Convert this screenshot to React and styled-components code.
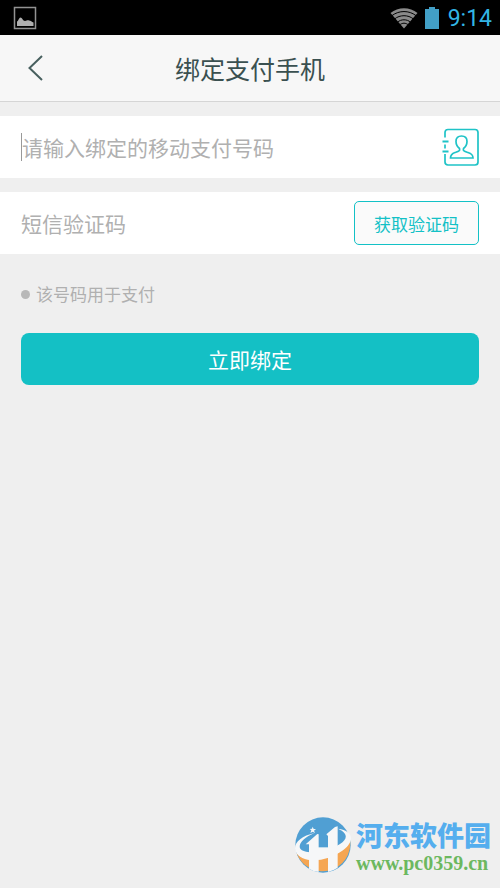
import styled, { createGlobalStyle } from 'styled-components'

const App = () => {
  return (
    <>
      <GlobalStyle />
      <Screen>
        <StatusBar>
          <PictureIcon />
          <StatusIcons>
            <WifiIcon />
            <BatteryIcon />
            <Clock>9:14</Clock>
          </StatusIcons>
        </StatusBar>

        <Header>
          <BackButton type="button" aria-label="返回">
            <BackIcon />
          </BackButton>
          <Title>绑定支付手机</Title>
        </Header>

        <Form onSubmit={(e) => e.preventDefault()}>
          <Row>
            <Caret />
            <Field type="tel" aria-label="移动支付号码" placeholder="请输入绑定的移动支付号码" />
            <IconButton type="button" aria-label="通讯录">
              <ContactIcon />
            </IconButton>
          </Row>
          <Row>
            <Field type="text" aria-label="短信验证码" placeholder="短信验证码" />
            <CodeButton type="button">获取验证码</CodeButton>
          </Row>
          <Note>该号码用于支付</Note>
          <SubmitButton type="submit">立即绑定</SubmitButton>
        </Form>

        <Brand>
          <BrandLogo />
          <BrandText>
            <BrandName>河东软件园</BrandName>
            <BrandUrl>www.pc0359.cn</BrandUrl>
          </BrandText>
        </Brand>
      </Screen>
    </>
  )
}

const PictureIcon = () => (
  <svg width="24" height="24" viewBox="0 0 24 24" aria-hidden="true">
    <rect x="1.5" y="1.5" width="21" height="21" fill="none" stroke="#929292" strokeWidth="1.5" />
    <path d="M4 20V15.5C5.5 15 6 11.500 7.500 11.500C9 11.500 10 15 12 15C13.500 15 14.500 14 16 14.500C18 14.500 18.500 16 20.500 16.500V20Z" fill="#b0b0b0" />
  </svg>
)

const WifiIcon = () => (
  <svg width="28" height="22" viewBox="0 0 28 22" aria-hidden="true">
    <path d="M0.500 6C8 -0.500 20 -0.500 27.500 6L14 21.500Z" fill="#8a8a8a" />
    <g fill="none" stroke="#000" strokeWidth="1">
      <path d="M2 8.600C9 3.200 19 3.200 26 8.600" />
      <path d="M4.500 12C10 7.600 18 7.600 23.500 12" />
      <path d="M7.500 15.200C11 12 17 12 20.500 15.200" />
      <path d="M9.500 18C12.500 15.600 15.500 15.600 18.500 18" />
    </g>
  </svg>
)

const BatteryIcon = () => (
  <svg width="14" height="22" viewBox="0 0 14 22" aria-hidden="true">
    <path d="M0 2H4V0H10V2H14V22H0Z" fill="#429fc6" />
  </svg>
)

const BackIcon = () => (
  <svg width="16" height="26" viewBox="0 0 16 26" aria-hidden="true">
    <path d="M14 1L1.500 13L14 25" fill="none" stroke="#48605f" strokeWidth="2" />
  </svg>
)

const ContactIcon = () => (
  <svg width="38" height="38" viewBox="0 0 38 38" aria-hidden="true">
    <g fill="none" stroke="#1fc3c7" strokeWidth="1.700">
      <path d="M4 9.500V4.500Q4 1.500 7 1.500H34Q37 1.500 37 4.500V34Q37 37 34 37H7Q4 37 4 34V26" />
      <path d="M4 16.500V20.500" />
      <path d="M1.500 13.500H7.500M1.500 23.500H7.500" strokeWidth="2" />
      <path d="M18.500 20.500C16 18.500 15 17 15 13.500C15 10 17 8 20.500 8C24 8 26 10 26 13.500C26 17 25 18.500 22.500 20.500C21.500 23 24 23.500 27 24.500C31 25.800 32 27 32 30H9.500C9.500 27 10.500 25.800 14 24.500C17 23.500 19.500 23 18.500 20.500Z" />
    </g>
  </svg>
)

const BrandLogo = () => (
  <svg width="62" height="62" viewBox="0 0 186 186" aria-hidden="true">
    <circle cx="93" cy="93" r="83" fill="#509fd3" />
    <path d="M14 118C55 145 125 136 174 78A83 83 0 0 1 14 118Z" fill="#f5a653" />
    <g fill="#f6f7f8">
      <path d="M41 91L76 60L80 61V174Q66 174 51 164V91Z" />
      <path d="M103 61L129 39L137 37V161Q124 170 108 174V66Z" />
      <path d="M78 100H112V124H78Z" />
      <path d="M68 57C24 66 2 91 11 112C26 150 102 147 153 109C190 81 184 50 138 44C168 57 168 74 144 90C101 118 36 121 25 104C17 91 35 70 68 57Z" />
      <path d="M62 38L65 45L72 45L66 50L69 57L62 53L55 57L58 49L53 45L60 44Z" />
    </g>
  </svg>
)

const GlobalStyle = createGlobalStyle`
  * {
    box-sizing: border-box;
  }

  body {
    margin: 0;
    background: #efefef;
    font-family: "Noto Sans CJK SC", sans-serif;
  }

  button, input {
    font-family: inherit;
  }

  svg {
    display: block;
    flex: none;
  }
`

const Screen = styled.main`
  position: relative;
  min-height: 100vh;
`

const StatusBar = styled.div`
  display: flex;
  align-items: center;
  justify-content: space-between;
  height: 35px;
  padding: 0 8px 0 13px;
  background: #000;
`

const StatusIcons = styled.div`
  display: flex;
  align-items: center;
  gap: 7px;
`

const Clock = styled.time`
  padding: 2px 0 0 2px;
  color: #33b5e5;
  font-family: Roboto, sans-serif;
  font-size: 23px;
  line-height: 32px;
`

const Header = styled.header`
  display: grid;
  grid-template-columns: 56px 1fr 56px;
  align-items: center;
  height: 67px;
  border-bottom: 1px solid #d5d5d5;
  background: #f7f7f7;
`

const BackButton = styled.button`
  display: flex;
  justify-content: flex-end;
  padding: 12px;
  border: 0;
  background: none;
  cursor: pointer;
`

const Title = styled.h1`
  margin: 0;
  color: #3a5050;
  font-size: 25px;
  font-weight: 400;
  line-height: 36px;
  text-align: center;
`

const Form = styled.form`
  display: flex;
  flex-direction: column;
  gap: 14px;
  padding-top: 14px;
`

const Row = styled.div`
  display: flex;
  align-items: center;
  height: 62px;
  padding: 0 21px;
  background: #fff;
`

const Caret = styled.span`
  width: 1px;
  height: 28px;
  background: #999;
`

const Field = styled.input`
  flex: 1;
  min-width: 0;
  height: 36px;
  padding: 0;
  border: 0;
  outline: 0;
  background: none;
  color: #3a5050;
  font-size: 21px;

  &::placeholder {
    color: #b0b0b0;
    opacity: 1;
  }
`

const IconButton = styled.button`
  padding: 0;
  border: 0;
  background: none;
  cursor: pointer;
`

const CodeButton = styled.button`
  width: 125px;
  height: 44px;
  padding: 0;
  border: 1px solid #13c1c6;
  border-radius: 5px;
  background: #fafafa;
  color: #13c1c6;
  font-size: 17px;
  cursor: pointer;
`

const Note = styled.p`
  display: flex;
  align-items: center;
  gap: 6px;
  margin: 13px 21px 12px;
  color: #b0b0b0;
  font-size: 17px;
  line-height: 26px;

  &::before {
    content: "";
    width: 9px;
    height: 9px;
    border-radius: 50%;
    background: #b8b8b8;
  }
`

const SubmitButton = styled.button`
  height: 52px;
  margin: 0 21px;
  border: 0;
  border-radius: 8px;
  background: #14c0c5;
  color: #fff;
  font-size: 21px;
  cursor: pointer;
`

/* site mark over the bottom right corner */
const Brand = styled.div`
  position: absolute;
  right: 9px;
  bottom: 12px;
  display: flex;
  align-items: center;
  gap: 2px;
`

const BrandText = styled.div`
  padding-top: 4px;
`

const BrandName = styled.div`
  color: #55aeee;
  font-size: 27px;
  font-weight: 900;
  line-height: 32px;
`

const BrandUrl = styled.div`
  color: #6cb85f;
  font-family: "Liberation Serif", serif;
  font-size: 20px;
  font-weight: 700;
  line-height: 24px;
`

export default App
